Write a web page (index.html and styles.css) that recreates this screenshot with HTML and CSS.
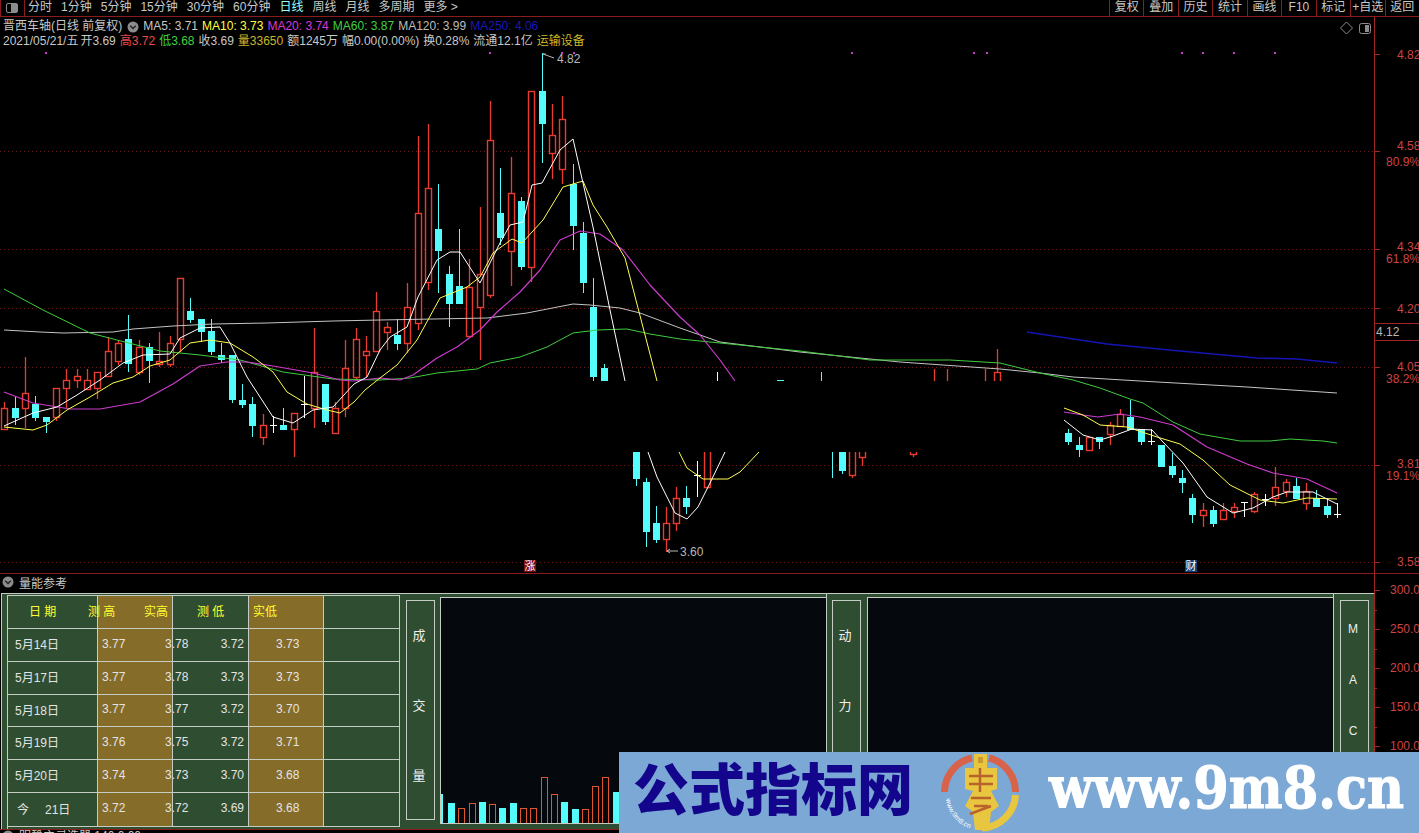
FILE: index.html
```html
<!DOCTYPE html>
<html lang="zh-CN">
<head>
  <meta charset="UTF-8" />
  <title>晋西车轴 日线</title>
  <link rel="stylesheet" href="styles.css">
</head>
<body>
  <div class="page">
    <div class="topbar">
      <div class="pane-btn"><span class="pane-icon"></span></div>
      <div class="periods">
        <span>分时</span><span>1分钟</span><span>5分钟</span><span>15分钟</span><span>30分钟</span><span>60分钟</span>
        <span class="active">日线</span><span>周线</span><span>月线</span><span>多周期</span><span>更多 &gt;</span>
      </div>
      <div class="tools">
        <span>复权</span><span>叠加</span><span>历史</span><span>统计</span><span>画线</span><span>F10</span><span>标记</span><span>+自选</span><span>返回</span>
      </div>
    </div>

    <div class="main">
      <svg id="kline" class="kline" viewBox="0 17 1419 556" width="1419" height="556">
        <g class="grid">
          <line x1="0" x2="1374" y1="151.5" y2="151.5"/>
          <line x1="0" x2="1374" y1="249.5" y2="249.5"/>
          <line x1="0" x2="1374" y1="308.5" y2="308.5"/>
          <line x1="0" x2="1374" y1="367.5" y2="367.5"/>
          <line x1="0" x2="1374" y1="465.5" y2="465.5"/>
          <line x1="0" x2="1374" y1="562.5" y2="562.5"/>
        </g>
        <g id="candles"></g>
        <g id="lines"></g>
        <rect class="erased" x="600" y="381" width="463" height="71"/>
        <g class="dots">
          <rect x="45" y="52" width="2" height="2"/><rect x="489" y="52" width="2" height="2"/>
          <rect x="561" y="52" width="2" height="2"/><rect x="573" y="52" width="2" height="2"/>
          <rect x="851" y="52" width="2" height="2"/><rect x="973" y="52" width="2" height="2"/>
          <rect x="986" y="52" width="2" height="2"/><rect x="1181" y="52" width="2" height="2"/>
          <rect x="1202" y="52" width="2" height="2"/><rect x="1233" y="52" width="2" height="2"/>
          <rect x="1274" y="52" width="2" height="2"/>
        </g>
        <path class="marker" d="M543 54h3M543 54l11 4M667 551h11M667 551l3-2M667 551l3 2"/>
        <text class="mark-text" x="557" y="63">4.82</text>
        <text class="mark-text" x="680" y="556">3.60</text>
        <path class="corner" d="M1346.5 22l6 6-6 6-6-6z"/>
        <rect class="corner" x="1359.5" y="23.5" width="11" height="10" rx="2"/>
        <rect class="corner-fill" x="1365" y="25" width="4" height="7"/>

        <line class="axis" x1="1374.5" x2="1374.5" y1="17" y2="573"/>
        <path class="axis" d="M1374 54.5h6M1374 151.5h6M1374 249.5h6M1374 308.5h6M1374 367.5h6M1374 465.5h6M1374 562.5h6"/>
        <path class="axis" d="M1374 323.5h45M1374 340.5h45"/>
        <text class="price-now" x="1376" y="336">4.12</text>
        <g class="scale">
          <text x="1397" y="59">4.82</text>
          <text x="1397" y="150">4.58</text><text x="1386" y="166">80.9%</text>
          <text x="1397" y="251">4.34</text><text x="1386" y="263">61.8%</text>
          <text x="1397" y="313">4.20</text>
          <text x="1397" y="371">4.05</text><text x="1386" y="383">38.2%</text>
          <text x="1397" y="468">3.81</text><text x="1386" y="480">19.1%</text>
          <text x="1397" y="566">3.58</text>
        </g>
      </svg>

      <div class="quote">
        <div class="quote-row">
          <span class="stock">晋西车轴(日线 前复权)</span>
          <svg class="fold" viewBox="0 0 12 12"><circle cx="6" cy="6" r="5.5"/><path d="M3.2 4.8L6 7.6l2.8-2.8"/></svg>
          <span>MA5: 3.71</span>
          <span class="c-yellow">MA10: 3.73</span>
          <span class="c-magenta">MA20: 3.74</span>
          <span class="c-green">MA60: 3.87</span>
          <span class="c-gray">MA120: 3.99</span>
          <span class="c-blue">MA250: 4.06</span>
        </div>
        <div class="quote-row">
          <span class="quote-date">2021/05/21/五</span>
          <span>开3.69</span>
          <span class="c-red">高3.72</span>
          <span class="c-green">低3.68</span>
          <span>收3.69</span>
          <span class="c-olive">量33650</span>
          <span>额1245万</span>
          <span>幅0.00(0.00%)</span>
          <span>换0.28%</span>
          <span>流通12.1亿</span>
          <span class="c-olive">运输设备</span>
        </div>
      </div>
      <span class="badge badge-red">涨</span>
      <span class="badge badge-blue">财</span>
    </div>

    <div class="lower">
      <div class="lower-body">
        <div class="lower-head">
          <svg class="fold" viewBox="0 0 12 12"><circle cx="6" cy="6" r="5.5"/><path d="M3.2 4.8L6 7.6l2.8-2.8"/></svg>
          <span>量能参考</span>
        </div>
        <div class="panel">
          <div class="qtable">
            <div class="cell head pad-date">日 期</div>
            <div class="cell head brown split"><span class="pull">测 高</span><span>实高</span></div>
            <div class="cell head pad-mid">测 低</div>
            <div class="cell head brown pad-small">实低</div>
            <div class="cell"></div>

            <div class="cell pad-row">5月14日</div>
            <div class="cell brown pad-small">3.77</div>
            <div class="cell split"><span class="pull-num">3.78</span><span>3.72</span></div>
            <div class="cell brown pad-val">3.73</div>
            <div class="cell"></div>

            <div class="cell pad-row">5月17日</div>
            <div class="cell brown pad-small">3.77</div>
            <div class="cell split"><span class="pull-num">3.78</span><span>3.73</span></div>
            <div class="cell brown pad-val">3.73</div>
            <div class="cell"></div>

            <div class="cell pad-row">5月18日</div>
            <div class="cell brown pad-small">3.77</div>
            <div class="cell split"><span class="pull-num">3.77</span><span>3.72</span></div>
            <div class="cell brown pad-val">3.70</div>
            <div class="cell"></div>

            <div class="cell pad-row">5月19日</div>
            <div class="cell brown pad-small">3.76</div>
            <div class="cell split"><span class="pull-num">3.75</span><span>3.72</span></div>
            <div class="cell brown pad-val">3.71</div>
            <div class="cell"></div>

            <div class="cell pad-row">5月20日</div>
            <div class="cell brown pad-small">3.74</div>
            <div class="cell split"><span class="pull-num">3.73</span><span>3.70</span></div>
            <div class="cell brown pad-val">3.68</div>
            <div class="cell"></div>

            <div class="cell pad-today"><span>今</span><span>21日</span></div>
            <div class="cell brown pad-small">3.72</div>
            <div class="cell split"><span class="pull-num">3.72</span><span>3.69</span></div>
            <div class="cell brown pad-val">3.68</div>
            <div class="cell"></div>
          </div>

          <div class="side"><div class="side-box"><span>成</span><span>交</span><span>量</span></div></div>
          <div class="plot plot-vol">
            <i class="bar up first" style="height:29px"></i>
            <i class="bar up" style="height:20px"></i>
            <i class="bar down" style="height:15px"></i>
            <i class="bar down" style="height:20px"></i>
            <i class="bar up" style="height:21px"></i>
            <i class="bar down" style="height:19px"></i>
            <i class="bar up" style="height:15px"></i>
            <i class="bar up" style="height:20px"></i>
            <i class="bar down" style="height:15px"></i>
            <i class="bar down" style="height:15px"></i>
            <i class="bar down" style="height:46px"></i>
            <i class="bar down" style="height:29px"></i>
            <i class="bar up" style="height:21px"></i>
            <i class="bar up" style="height:14px"></i>
            <i class="bar down" style="height:14px"></i>
            <i class="bar down" style="height:37px"></i>
            <i class="bar down" style="height:46px"></i>
            <i class="bar up" style="height:31px"></i>
          </div>
          <div class="side side-mid"><div class="side-box"><span>动</span><span>力</span></div></div>
          <div class="plot plot-dyn"></div>
          <div class="side side-last"><div class="side-box side-mac"><span>M</span><span>A</span><span>C</span></div></div>
        </div>
      </div>
      <svg class="lower-axis" viewBox="0 0 45 255" width="45" height="255">
        <line class="axis" x1="0.5" x2="0.5" y1="0" y2="255"/>
        <path class="axis" d="M0 16.5h6M0 55.5h6M0 94.5h6M0 133.5h6M0 172.5h6M0 36.5h3M0 75.5h3M0 114.5h3M0 153.5h3"/>
        <g class="scale">
          <text x="16" y="20">300.0</text>
          <text x="16" y="59">250.0</text>
          <text x="16" y="98">200.0</text>
          <text x="16" y="137">150.0</text>
          <text x="16" y="176">100.0</text>
        </g>
      </svg>
    </div>

    <div class="next-pane">
      <svg class="fold" viewBox="0 0 12 12"><circle cx="6" cy="6" r="5.5"/><path d="M3.2 4.8L6 7.6l2.8-2.8"/></svg>
      <span>明静主灵选器 140 0.00</span>
    </div>
  </div>

  <div class="stamp">
    <span class="stamp-title">公式指标网</span>
    <svg class="stamp-logo" viewBox="0 0 78 78" width="78" height="78">
      <defs><path id="ringText" d="M5 45A35 35 0 0 0 38 76"/></defs>
      <path class="logo-red" d="M3.5 38A35 35 0 0 1 31 4"/>
      <path class="logo-red" d="M48 4A35 35 0 0 1 74.500 38"/>
      <path class="logo-yellow" d="M74.500 41A35 35 0 0 1 41 74"/>
      <path class="logo-coin" d="M33 0h13v14h10v21l-6 2 8 15-8 6-2 18H34l-2-18-8-6 8-15-8-2V14h9z"/>
      <rect class="logo-cut" x="37" y="3" width="5" height="6"/>
      <path class="logo-stroke" d="M28 22h24M28 30h24M39 14v24M30 44h20M33 52h14M29 60l21-8"/>
      <text class="logo-text"><textPath href="#ringText">www.9m8.cn</textPath></text>
    </svg>
    <span class="stamp-url">www.9m8.cn</span>
  </div>

  <script src="chart.js"></script>
</body>
</html>
```

FILE: styles.css
```css
* {
  margin: 0;
  padding: 0;
  box-sizing: border-box;
}
body {
  width: 1419px;
  height: 833px;
  background: #000;
  overflow: hidden;
  position: relative;
  font-family: "Liberation Sans", "Noto Sans CJK SC", sans-serif;
  font-size: 12px;
  color: #c8c8c8;
}
.page {
  display: flex;
  flex-direction: column;
  height: 833px;
}

/* top bar */
.topbar {
  display: flex;
  height: 17px;
  line-height: 15px;
  border-bottom: 1px solid #8a1c1c;
  flex: none;
}
.pane-btn {
  width: 25px;
  border-left: 1px solid #8a1c1c;
  border-right: 1px solid #8a1c1c;
  padding: 3px 0 0 5px;
}
.pane-icon {
  display: block;
  width: 12px;
  height: 10px;
  border: 1px solid #8c8c8c;
  border-radius: 2px;
  background: linear-gradient(90deg, #000 45%, #8c8c8c 45%);
}
.periods {
  display: flex;
  gap: 9px;
  padding-left: 3px;
}
.periods .active {
  color: #9ffcfc;
}
.tools {
  display: flex;
  margin-left: auto;
  width: 310px;
}
.tools span {
  flex: 1;
  text-align: center;
  border-left: 1px solid #8a1c1c;
  white-space: nowrap;
}

/* k-line */
.main {
  position: relative;
  height: 557px;
  border-bottom: 1px solid #8a1c1c;
  flex: none;
}
.kline {
  display: block;
}
.grid line {
  stroke: #6a1a1a;
  stroke-dasharray: 1 3;
}
.erased {
  fill: #000;
}
.dots rect {
  fill: #c83cc8;
}
.marker {
  fill: none;
  stroke: #b8b8b8;
}
.mark-text {
  fill: #b8b8b8;
  font-size: 12px;
}
.corner {
  fill: none;
  stroke: #8c8c8c;
}
.corner-fill {
  fill: #8c8c8c;
}
.axis {
  fill: none;
  stroke: #a02626;
}
.scale text {
  fill: #cc4444;
  font-size: 12px;
}
.price-now {
  fill: #b8b8b8;
  font-size: 12px;
}
.quote {
  position: absolute;
  top: 2px;
  left: 3px;
  line-height: 15px;
}
.quote-row {
  display: flex;
  gap: 4px;
  align-items: center;
  white-space: nowrap;
}
.stock {
  margin-right: 1px;
}
.quote-date {
  margin-right: -2px;
}
.fold {
  width: 12px;
  height: 12px;
  flex: none;
}
.fold circle {
  fill: #8c8c8c;
}
.fold path {
  fill: none;
  stroke: #222;
  stroke-width: 1.4;
}
.c-yellow { color: #ffff40; }
.c-magenta { color: #d838d8; }
.c-green { color: #40d040; }
.c-gray { color: #bcbcbc; }
.c-blue { color: #1818b8; }
.c-red { color: #e84c4c; }
.c-olive { color: #c8b828; }
.badge {
  position: absolute;
  top: 543px;
  width: 12px;
  height: 12px;
  line-height: 12px;
  font-size: 11px;
  text-align: center;
  color: #fff;
}
.badge-red {
  left: 524px;
  background: #7a0c14;
}
.badge-blue {
  left: 1185px;
  background: #103c78;
}

/* lower pane */
.lower {
  display: flex;
  height: 255px;
  flex: none;
}
.lower-body {
  width: 1374px;
  display: flex;
  flex-direction: column;
}
.lower-head {
  height: 19px;
  display: flex;
  align-items: center;
  gap: 5px;
  padding-left: 2px;
  padding-bottom: 3px;
  flex: none;
}
.panel {
  flex: 1;
  display: flex;
  background: #2f4d30;
  border-top: 1px solid #c4ccc4;
  border-left: 1px solid #c4ccc4;
  margin-left: 1px;
  padding-left: 5px;
}
.lower-axis {
  flex: none;
  display: block;
}
.qtable {
  width: 393px;
  margin-top: 1px;
  display: grid;
  grid-template-columns: 90px 75px 76px 75px 76px;
  grid-template-rows: 33px 33px 33px 32px 33px 33px 34px;
  border-top: 1px solid #c4ccc4;
  border-left: 1px solid #c4ccc4;
  flex: none;
}
.cell {
  border-right: 1px solid #c4ccc4;
  border-bottom: 1px solid #c4ccc4;
  display: flex;
  align-items: center;
  padding-bottom: 3px;
  color: #e4e4e4;
  white-space: nowrap;
}
.cell.head {
  color: #ffff30;
}
.brown {
  background: #856c28;
}
.pad-date { padding-left: 21px; }
.pad-row { padding-left: 7px; }
.pad-small { padding-left: 4px; }
.pad-mid { padding-left: 24px; }
.pad-val { padding-left: 27px; }
.pad-today {
  padding-left: 9px;
  gap: 16px;
}
.split {
  justify-content: space-between;
  padding-right: 4px;
}
.pull {
  margin-left: -10px;
}
.pull-num {
  margin-left: -8px;
}
.side {
  width: 40px;
  padding: 6px 0 8px 6px;
  flex: none;
}
.side-mid {
  width: 41px;
  border-left: 1px solid #c4ccc4;
  padding-left: 5px;
}
.side-last {
  width: 41px;
  border-left: 1px solid #c4ccc4;
  padding-left: 6px;
}
.side-box {
  width: 29px;
  height: 220px;
  border: 1px solid #c4ccc4;
  display: flex;
  flex-direction: column;
  align-items: center;
  gap: 54px;
  padding-top: 27px;
  padding-right: 3px;
  color: #f0f0f0;
  font-size: 13px;
  line-height: 16px;
}
.side-mac {
  gap: 35px;
  padding-top: 20px;
  font-size: 12px;
}
.plot {
  flex: none;
  margin-top: 3px;
  margin-bottom: 5px;
  background: #05090d;
  border-top: 1px solid #c4ccc4;
  border-left: 1px solid #c4ccc4;
  border-bottom: 1px solid #c4ccc4;
}
.plot-vol {
  width: 386px;
  display: flex;
  align-items: flex-end;
  gap: 3.3px;
}
.plot-dyn {
  width: 466px;
}
.bar {
  display: block;
  width: 7px;
  flex: none;
}
.bar.first {
  width: 2px;
  margin-right: 1.7px;
}
.bar.up {
  background: #54fcfc;
}
.bar.down {
  border: 1px solid #e0562c;
  border-bottom: 0;
}
.next-pane {
  flex: none;
  height: 4px;
  border-top: 1px solid #8a1c1c;
  display: flex;
  gap: 5px;
  padding-left: 2px;
  line-height: 13px;
  overflow: hidden;
}

/* site stamp */
.stamp {
  position: absolute;
  left: 619px;
  top: 752px;
  width: 800px;
  height: 81px;
  background: #7ca8d6;
  display: flex;
  align-items: center;
  padding-left: 14px;
}
.stamp-title {
  color: #14068c;
  font-size: 56px;
  font-weight: 900;
  line-height: 1;
  width: 308px;
  margin-bottom: 4px;
  white-space: nowrap;
}
.stamp-logo {
  flex: none;
}
.stamp-url {
  margin-left: 30px;
  margin-bottom: 10px;
  color: #fff;
  font-family: "DejaVu Serif", serif;
  font-weight: 700;
  font-size: 51px;
  line-height: 1;
  white-space: nowrap;
  transform: scaleY(1.15);
  -webkit-text-stroke: 1px #fff;
}
.logo-red,
.logo-yellow {
  fill: none;
  stroke-width: 7;
}
.logo-red { stroke: #d9624a; }
.logo-yellow { stroke: #e8c63f; }
.logo-coin { fill: #e8c63f; }
.logo-cut { fill: #c89a30; }
.logo-stroke {
  fill: none;
  stroke: #b8632c;
  stroke-width: 2.5;
}
.logo-text {
  fill: #fff;
  font-size: 7px;
}
```

FILE: chart.js
```js
// x, high, body top, body bottom, low, kind (r = red hollow, c = cyan, w = flat)
var candles = [
  [4,402,408,429,429,'r'],[15,397,408,417,425,'c'],[25,357,393,408,428,'r'],[35,396,404,417,421,'c'],
  [46,417,417,421,433,'c'],[56,388,388,417,421,'r'],[66,369,380,388,408,'r'],[77,369,376,380,388,'r'],
  [87,369,380,389,389,'r'],[97,372,372,388,399,'r'],[108,337,351,376,376,'r'],[118,340,343,361,365,'r'],
  [128,315,339,363,372,'c'],[139,340,347,372,375,'r'],[149,343,347,360,383,'c'],[159,332,361,364,367,'r'],
  [170,336,343,364,367,'r'],[180,278,278,339,352,'r'],[190,298,311,319,323,'c'],[201,319,319,331,342,'c'],
  [211,319,331,351,355,'c'],[221,343,355,359,363,'c'],[232,355,355,399,403,'c'],[242,384,400,404,408,'c'],
  [252,397,404,425,437,'c'],[263,414,425,437,445,'r'],[273,416,425,425,433,'w'],[283,408,425,429,429,'c'],
  [294,413,413,429,457,'r'],[304,376,404,404,418,'w'],[314,328,372,408,428,'r'],[325,384,384,421,425,'c'],
  [335,402,408,433,433,'r'],[345,340,368,408,417,'r'],[356,328,339,377,380,'r'],[366,336,351,355,377,'r'],
  [376,292,311,351,351,'r'],[387,322,327,332,350,'r'],[397,319,335,343,350,'c'],[407,283,307,343,353,'r'],
  [418,136,213,323,330,'r'],[428,124,188,282,290,'r'],[438,184,229,250,293,'c'],[449,266,274,303,327,'c'],
  [459,229,286,303,303,'c'],[469,259,287,336,336,'r'],[480,207,274,307,360,'r'],[490,101,140,295,298,'r'],
  [500,168,213,237,245,'c'],[511,157,193,251,286,'r'],[521,197,201,266,270,'c'],[531,91,91,267,282,'r'],
  [542,53,91,123,163,'c'],[552,104,135,153,179,'r'],[562,96,119,169,184,'r'],[573,164,184,225,250,'c'],
  [583,222,233,282,293,'c'],[593,278,307,376,381,'c'],[604,364,368,400,400,'c'],
  [636,400,400,478,486,'c'],[646,478,482,531,547,'c'],[656,506,523,539,543,'c'],[666,507,523,539,552,'r'],
  [676,487,498,523,531,'r'],[686,486,498,506,514,'c'],[697,461,475,475,497,'w'],[707,430,430,487,489,'r'],
  [717,372,420,420,440,'w'],[780,380,380,420,420,'c'],[821,372,420,430,440,'c'],
  [832,430,440,445,478,'c'],[842,430,430,470,474,'c'],[852,430,430,475,478,'r'],[862,430,430,457,466,'r'],
  [913,430,430,454,457,'r'],[934,369,400,420,430,'r'],[947,369,400,420,430,'r'],[985,369,400,420,430,'r'],
  [997,349,372,420,430,'r'],
  [1068,429,433,441,445,'c'],[1079,437,445,449,457,'c'],[1089,437,437,450,450,'r'],[1099,437,437,441,449,'c'],
  [1110,422,425,434,445,'r'],[1120,409,414,426,426,'r'],[1130,400,417,429,429,'c'],[1141,429,429,441,445,'c'],
  [1151,429,441,441,445,'w'],[1161,445,445,466,466,'c'],[1172,453,466,474,478,'c'],[1182,470,478,482,493,'c'],
  [1192,494,498,514,523,'c'],[1203,503,510,515,527,'r'],[1213,506,510,523,527,'c'],[1223,503,510,519,519,'r'],
  [1234,503,507,511,518,'r'],[1244,502,502,502,517,'w'],[1254,492,494,511,513,'r'],[1265,494,499,499,506,'w'],
  [1275,467,487,498,506,'r'],[1286,479,482,491,497,'r'],[1296,478,486,498,498,'c'],[1306,483,491,503,510,'r'],
  [1316,490,498,506,506,'c'],[1327,498,506,514,518,'c'],[1337,503,514,514,518,'w']
];

var lines = [
  ['#c4c4c4', 1, [[4,330],[40,332],[63,333],[113,332],[133,329],[173,326],[213,324],[267,323],[333,321],[380,320],[487,318],[527,313],[573,304],[590,305],[620,308],[640,313],[680,328],[720,342],[800,352],[900,362],[1000,369],[1040,373],[1073,377],[1140,381],[1247,387],[1337,393]]],
  ['#40cc40', 1, [[4,289],[43,310],[90,333],[117,340],[160,351],[200,355],[240,360],[283,372],[333,379],[380,380],[410,378],[437,373],[477,369],[490,363],[520,357],[547,347],[573,333],[597,330],[627,329],[650,334],[680,339],[740,345],[800,351],[870,360],[950,360],[1000,363],[1040,373],[1073,380],[1100,388],[1130,399],[1143,403],[1173,422],[1200,434],[1240,441],[1270,441],[1290,439],[1323,441],[1337,443]]],
  ['#1414b4', 1.5, [[1027,332],[1040,334],[1107,344],[1180,351],[1257,358],[1297,359],[1337,363]]],
  ['#cc3ccc', 1.2, [[4,392],[33,403],[70,409],[100,409],[140,402],[173,384],[200,366],[227,362],[247,362],[273,366],[313,373],[340,380],[353,381],[380,378],[400,380],[413,375],[437,358],[457,347],[480,330],[497,312],[520,292],[540,270],[560,240],[580,231],[600,234],[623,250],[650,285],[680,317],[700,335],[720,360],[735,381]]],
  ['#cc3ccc', 1.2, [[1064,412],[1083,415],[1098,417],[1120,414],[1140,417],[1173,425],[1207,447],[1247,464],[1273,473],[1307,479],[1337,493]]],
  ['#ffff50', 1, [[4,427],[33,430],[47,425],[67,410],[90,397],[113,383],[133,377],[150,366],[170,360],[190,343],[210,340],[230,343],[253,357],[273,372],[287,392],[307,404],[327,410],[340,413],[354,402],[365,390],[380,378],[397,365],[417,340],[440,298],[467,287],[480,277],[493,253],[512,239],[522,243],[543,220],[563,187],[583,181],[593,205],[607,227],[625,258],[657,381],[679,452],[687,468],[703,479],[728,479],[740,472],[759,452]]],
  ['#ffff50', 1, [[1064,408],[1083,415],[1100,425],[1127,427],[1157,437],[1180,444],[1203,460],[1230,485],[1260,500],[1283,503],[1307,498],[1337,499]]],
  ['#ffffff', 1, [[4,426],[33,413],[57,407],[77,395],[100,380],[123,363],[143,355],[170,354],[180,338],[200,328],[220,327],[230,343],[247,377],[273,417],[293,423],[313,410],[333,407],[354,384],[367,377],[380,350],[390,337],[407,327],[418,297],[437,260],[450,252],[460,252],[480,283],[500,243],[510,225],[523,222],[532,185],[542,183],[560,150],[573,139],[593,227],[610,310],[625,381],[648,452],[657,477],[675,513],[687,519],[698,507],[710,483],[725,452]]],
  ['#ffffff', 1, [[1064,420],[1083,435],[1100,440],[1113,436],[1132,429],[1152,430],[1163,442],[1183,463],[1207,497],[1233,513],[1253,508],[1273,497],[1287,492],[1313,492],[1337,504]]]
];

var NS = 'http://www.w3.org/2000/svg';

function add(parent, tag, attrs) {
  var el = document.createElementNS(NS, tag);
  for (var k in attrs) el.setAttribute(k, attrs[k]);
  parent.appendChild(el);
  return el;
}

var candleBox = document.getElementById('candles');
candles.forEach(function(c) {
  var x = c[0] + 0.5, color = c[5] === 'r' ? '#e83c30' : c[5] === 'c' ? '#54fcfc' : '#ffffff';
  add(candleBox, 'line', { x1: x, x2: x, y1: c[1], y2: c[4], stroke: color, 'stroke-width': c[5] === 'r' ? 1.3 : 1 });
  if (c[5] === 'w') {
    add(candleBox, 'line', { x1: x - 3.5, x2: x + 3.5, y1: c[2] + 0.5, y2: c[2] + 0.5, stroke: color });
  } else if (c[5] === 'r') {
    add(candleBox, 'rect', { x: x - 3, y: c[2] + 0.5, width: 6, height: c[3] - c[2], fill: '#000', stroke: color, 'stroke-width': 1.4 });
  } else {
    add(candleBox, 'rect', { x: x - 3.5, y: c[2], width: 7, height: c[3] - c[2] + 1, fill: color });
  }
});

var lineBox = document.getElementById('lines');
lines.forEach(function(l) {
  add(lineBox, 'polyline', {
    points: l[2].join(' '),
    fill: 'none',
    stroke: l[0],
    'stroke-width': l[1],
    'stroke-linejoin': 'round'
  });
});
```
